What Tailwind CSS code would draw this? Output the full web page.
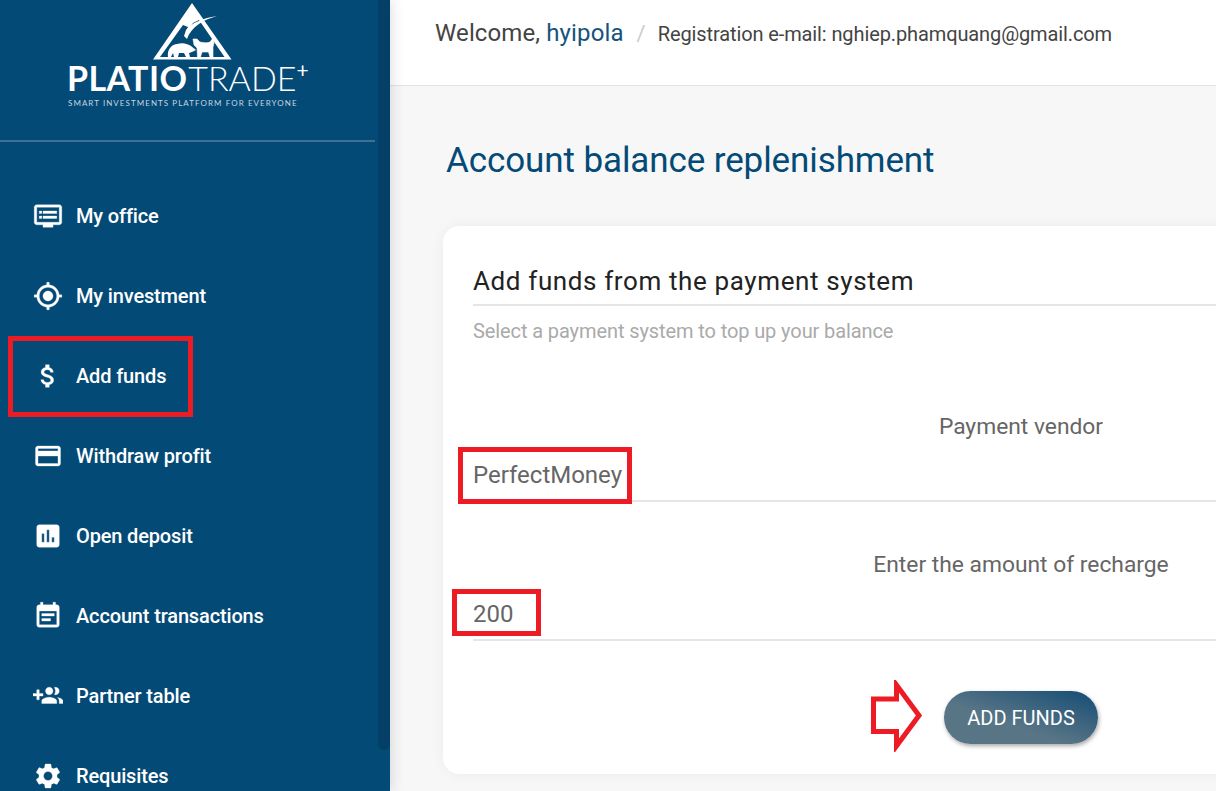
<!DOCTYPE html>
<html lang="en">
<head>
<meta charset="utf-8">
<title>Account balance replenishment</title>
<script src="https://cdn.jsdelivr.net/npm/@tailwindcss/browser@4"></script>
</head>
<body class="relative h-[791px] w-[1216px] overflow-hidden bg-[#f7f7f7] font-['Roboto',sans-serif]">
<div class="flex h-[791px] w-[1216px]">
  <aside class="relative z-10 h-[791px] w-[390px] shrink-0 overflow-hidden bg-[#044a76] text-white shadow-[0_0_14px_rgba(0,0,0,0.16)]">
    <div class="absolute right-0 top-0 h-[750px] w-3 rounded-b-md bg-[#033f66]"></div>
    <div class="relative h-[140px] w-[375px]">
      <svg class="absolute left-[153px] top-[3px]" width="80" height="57" viewBox="0 0 80 57">
        <path fill="#fff" fill-rule="evenodd" d="M39 0 78.500 56.500H0L39 0ZM46 17 71.500 54H7L30 22 35 24 33 30 40 20Z"/>
        <path fill="#fff" d="M64 13C50 17 38 24 34 36L31 33 33 27C38 20 50 15 64 13Z"/>
        <path fill="#fff" d="M15 54C14 48 17 42 24 41 30 39 35 41 38 43L43 47 39 49 36 50 37 54 33 54 31 50 26 50 25 54 21 54 20 50 18 54Z"/>
        <path fill="#fff" stroke="#fff" stroke-width="0.6" d="M40 36 44 36 47 39C51 40 55 40 57 39L60 35 61 40 60 44 60 54 57 54 55.500 49 49 49 47.500 54 44.500 54 44 45 41 42Z"/>
      </svg>
      <div class="absolute left-[67px] top-[63px] flex items-baseline whitespace-nowrap font-['Lato',sans-serif] text-[34px] leading-[30px]">
        <span class="font-bold tracking-[0.4px]">PLATIO</span><span class="ml-[1px] font-light">TRADE</span><span class="relative -top-[13px] text-[21px] leading-none">+</span>
      </div>
      <div class="absolute left-[68px] top-[97px] whitespace-nowrap font-['Lato',sans-serif] text-[8px] leading-3 tracking-[1.06px] text-[#c5d5e0]">SMART INVESTMENTS PLATFORM FOR EVERYONE</div>
    </div>
    <div class="h-[2px] w-[375px] bg-[#3f7094]"></div>
    <nav class="mt-[34px] text-[20px] font-medium tracking-[-0.15px]">
      <a class="flex h-20 items-center gap-[13px] pl-[33px]"><svg class="size-[30px]" viewBox="0 0 24 24" fill="#fff" stroke="#fff" stroke-width="0.25"><path d="M21 3H3c-1.1 0-2 .9-2 2v12c0 1.1.9 2 2 2h5v2h8v-2h5c1.1 0 1.99-.9 1.99-2L23 5c0-1.1-.9-2-2-2zm0 14H3V5h18v12zm-2-9H8v2h11V8zm0 4H8v2h11v-2zM7 8H5v2h2V8zm0 4H5v2h2v-2z"/></svg><span>My office</span></a>
      <a class="flex h-20 items-center gap-[13px] pl-[33px]"><svg class="size-[30px]" viewBox="0 0 24 24" fill="#fff" stroke="#fff" stroke-width="0.25"><path d="M12 8c-2.21 0-4 1.790-4 4s1.790 4 4 4 4-1.790 4-4-1.790-4-4-4zm8.940 3c-.46-4.170-3.770-7.480-7.940-7.940V1h-2v2.060C6.830 3.520 3.520 6.830 3.060 11H1v2h2.060c.46 4.170 3.770 7.480 7.940 7.940V23h2v-2.060c4.170-.46 7.480-3.770 7.940-7.940H23v-2h-2.060zM12 19c-3.870 0-7-3.130-7-7s3.130-7 7-7 7 3.130 7 7-3.130 7-7 7z"/></svg><span>My investment</span></a>
      <a class="flex h-20 items-center gap-[13px] pl-[33px]"><svg class="size-[30px]" viewBox="0 0 24 24" fill="#fff" stroke="#fff" stroke-width="0.25"><path d="M11.8 10.9c-2.27-.59-3-1.2-3-2.15 0-1.09 1.01-1.85 2.7-1.85 1.78 0 2.44.85 2.5 2.1h2.21c-.07-1.72-1.12-3.3-3.21-3.81V3h-3v2.16c-1.94.42-3.5 1.68-3.5 3.61 0 2.31 1.91 3.46 4.7 4.13 2.5.6 3 1.48 3 2.41 0 .69-.49 1.79-2.7 1.79-2.06 0-2.87-.92-2.98-2.1h-2.2c.12 2.19 1.76 3.42 3.68 3.83V21h3v-2.15c1.95-.37 3.5-1.5 3.5-3.55 0-2.84-2.43-3.81-4.7-4.4z"/></svg><span>Add funds</span></a>
      <a class="flex h-20 items-center gap-[13px] pl-[33px]"><svg class="size-[30px]" viewBox="0 0 24 24" fill="#fff" stroke="#fff" stroke-width="0.25"><path d="M20 4H4c-1.11 0-1.99.89-1.99 2L2 18c0 1.11.89 2 2 2h16c1.11 0 2-.89 2-2V6c0-1.11-.89-2-2-2zm0 14H4v-6h16v6zm0-10H4V6h16v2z"/></svg><span>Withdraw profit</span></a>
      <a class="flex h-20 items-center gap-[13px] pl-[33px]"><svg class="size-[30px]" viewBox="0 0 24 24" fill="#fff" stroke="#fff" stroke-width="0.25"><path d="M19 3H5c-1.1 0-2 .9-2 2v14c0 1.1.9 2 2 2h14c1.1 0 2-.9 2-2V5c0-1.1-.9-2-2-2zM9 17H7v-7h2v7zm4 0h-2V7h2v10zm4 0h-2v-4h2v4z"/></svg><span>Open deposit</span></a>
      <a class="flex h-20 items-center gap-[13px] pl-[33px]"><svg class="size-[30px]" viewBox="0 0 24 24" fill="#fff" stroke="#fff" stroke-width="0.25"><path d="M17 10H7v2h10v-2zm2-7h-1V1h-2v2H8V1H6v2H5c-1.11 0-1.99.9-1.99 2L3 19c0 1.1.89 2 2 2h14c1.1 0 2-.9 2-2V5c0-1.1-.9-2-2-2zm0 16H5V8h14v11zm-5-5H7v2h7v-2z"/></svg><span>Account transactions</span></a>
      <a class="flex h-20 items-center gap-[13px] pl-[33px]"><svg class="size-[30px]" viewBox="0 0 24 24" fill="#fff" stroke="#fff" stroke-width="0.25"><path d="M8 10H5V7H3v3H0v2h3v3h2v-3h3v-2zm10 1c1.66 0 2.99-1.34 2.99-3S19.66 5 18 5c-.32 0-.63.05-.91.14.57.81.9 1.79.9 2.86s-.34 2.04-.9 2.86c.28.09.59.14.91.14zm-5 0c1.66 0 2.99-1.34 2.99-3S14.66 5 13 5s-3 1.34-3 3 1.34 3 3 3zm6.62 2.16c.83.73 1.38 1.66 1.38 2.84v2h3v-2c0-1.54-2.37-2.49-4.38-2.84zM13 13c-2 0-6 1-6 3v2h12v-2c0-2-4-3-6-3z"/></svg><span>Partner table</span></a>
      <a class="flex h-20 items-center gap-[13px] pl-[33px]"><svg class="size-[30px]" viewBox="0 0 24 24" fill="#fff" stroke="#fff" stroke-width="0.25"><path d="M19.14 12.94c.04-.3.06-.61.06-.94 0-.32-.02-.64-.07-.94l2.03-1.58c.18-.14.23-.41.12-.61l-1.92-3.32c-.12-.22-.37-.29-.59-.22l-2.39.96c-.5-.38-1.03-.7-1.62-.94l-.36-2.54c-.04-.24-.24-.41-.48-.41h-3.84c-.24 0-.43.17-.47.41l-.36 2.54c-.59.24-1.13.57-1.62.94l-2.39-.96c-.22-.08-.47 0-.59.22L2.74 8.87c-.12.21-.08.47.12.61l2.03 1.58c-.05.3-.09.63-.09.94s.02.64.07.94l-2.03 1.58c-.18.14-.23.41-.12.61l1.92 3.32c.12.22.37.29.59.22l2.39-.96c.5.38 1.03.7 1.62.94l.36 2.54c.05.24.24.41.48.41h3.84c.24 0 .44-.17.47-.41l.36-2.54c.59-.24 1.13-.56 1.62-.94l2.39.96c.22.08.47 0 .59-.22l1.92-3.32c.12-.22.07-.47-.12-.61l-2.01-1.58zM12 15.6c-1.98 0-3.6-1.62-3.6-3.6s1.62-3.6 3.6-3.6 3.6 1.62 3.6 3.6-1.62 3.6-3.6 3.6z"/></svg><span>Requisites</span></a>
    </nav>
  </aside>
  <main class="min-w-0 flex-1">
    <header class="flex h-[86px] items-start gap-[13px] whitespace-nowrap border-b border-[#e3e3e3] bg-white pl-[45px] pt-[18px]">
      <span class="text-[24px] leading-[30px] tracking-[0.12px] text-[#444]">Welcome, <span class="text-[#15537c]">hyipola</span></span>
      <span class="text-[22px] leading-[32px] text-[#ccc]">/</span>
      <span class="-ml-px text-[20px] leading-[32px] tracking-[-0.11px] text-[#444]">Registration e-mail: nghiep.phamquang@gmail.com</span>
    </header>
    <h1 class="ml-[56px] mt-[54px] whitespace-nowrap text-[35px] leading-[42px] tracking-[-0.1px] text-[#044a76]">Account balance replenishment</h1>
    <section class="ml-[53px] mt-[44px] h-[548px] w-[1156px] rounded-2xl bg-white px-[30px] pt-[36px] shadow-[0_0_14px_rgba(0,0,0,0.05)]">
      <h2 class="h-[44px] border-b-2 border-[#e5e5e5] text-[26px] leading-[38px] tracking-[0.62px] text-[#222]">Add funds from the payment system</h2>
      <p class="mt-[13px] text-[20px] leading-[24px] tracking-[-0.1px] text-[#aaa]">Select a payment system to top up your balance</p>
      <div class="mt-[70px] text-center text-[22.8px] leading-[28px] text-[#666]">Payment vendor</div>
      <div class="mt-[20px] h-[41px] border-b-2 border-[#e5e5e5] text-[24px] leading-[28px] text-[#666]">PerfectMoney</div>
      <div class="mt-[49px] text-center text-[22.8px] leading-[28px] text-[#666]">Enter the amount of recharge</div>
      <div class="mt-[21px] h-[41px] border-b-2 border-[#e5e5e5] text-[24px] leading-[28px] text-[#666]">200</div>
      <div class="mt-[50px] flex justify-center">
        <button class="h-[53px] w-[154px] rounded-full bg-gradient-to-tr from-[#587586] from-40% to-[#0d4c74] text-[20px] font-normal text-white shadow-[1px_2px_4px_rgba(0,0,0,0.35)]">ADD FUNDS</button>
      </div>
    </section>
  </main>
</div>
<div class="absolute left-[8px] top-[336px] z-20 h-[81px] w-[185px] border-[5px] border-[#ed1c24]"></div>
<div class="absolute left-[458px] top-[447px] z-20 h-[57px] w-[174px] border-[5px] border-[#ed1c24]"></div>
<div class="absolute left-[452px] top-[589px] z-20 h-[47px] w-[89px] border-[5px] border-[#ed1c24]"></div>
<svg class="absolute left-[870px] top-[680px] z-20" width="54" height="72" viewBox="0 0 54 72"><path d="M3.500 19H26.500V5L49 35.500 26.500 66V51.500H3.500Z" fill="#fff" stroke="#ed1c24" stroke-width="5" stroke-linejoin="miter"/></svg>
</body>
</html>
